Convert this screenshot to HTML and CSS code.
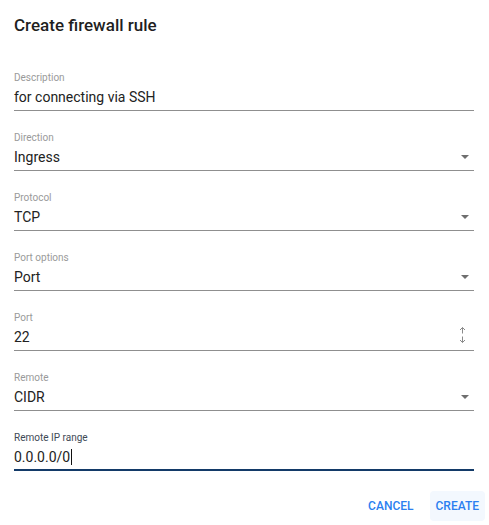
FILE: index.html
```html
<!DOCTYPE html>
<html>
<head>
<meta charset="utf-8">
<link rel="stylesheet" href="styles.css">
</head>
<body>
<div class="dialog">
  <h2 class="title">Create firewall rule</h2>
  <div class="fields">
    <div class="field">
      <div class="label">Description</div>
      <div class="control"><span class="value">for connecting via SSH</span></div>
    </div>
    <div class="field">
      <div class="label">Direction</div>
      <div class="control"><span class="value">Ingress</span><span class="caret-down"></span></div>
    </div>
    <div class="field">
      <div class="label">Protocol</div>
      <div class="control"><span class="value">TCP</span><span class="caret-down"></span></div>
    </div>
    <div class="field">
      <div class="label">Port options</div>
      <div class="control"><span class="value">Port</span><span class="caret-down"></span></div>
    </div>
    <div class="field">
      <div class="label">Port</div>
      <div class="control"><span class="value">22</span>
        <svg class="spinner" width="9" height="18" viewBox="0 0 9 18">
          <path d="M4.5 1.5 V7.5 M2 4 L4.5 1.5 L7 4" fill="none" stroke="#8a8a8a" stroke-width="1"/>
          <path d="M4.5 10.5 V16.5 M2 14 L4.5 16.5 L7 14" fill="none" stroke="#8a8a8a" stroke-width="1"/>
        </svg>
      </div>
    </div>
    <div class="field">
      <div class="label">Remote</div>
      <div class="control"><span class="value">CIDR</span><span class="caret-down"></span></div>
    </div>
    <div class="field focused">
      <div class="label">Remote IP range</div>
      <div class="control"><span class="value">0.0.0.0/0<span class="cursor"></span></span></div>
    </div>
  </div>
  <div class="actions">
    <button class="btn">CANCEL</button>
    <button class="btn primary">CREATE</button>
  </div>
</div>
</body>
</html>
```

FILE: styles.css
```css
html, body {
  margin: 0;
  padding: 0;
  background: #ffffff;
}
body {
  font-family: Roboto, "Liberation Sans", sans-serif;
  color: #212121;
}
.dialog {
  width: 489px;
  height: 525px;
  box-sizing: border-box;
  padding: 14px 15px 0 14px;
}
.title {
  margin: 0;
  font-size: 17px;
  font-weight: 500;
  line-height: 22px;
  color: #1f1f1f;
}
.fields {
  margin-top: 35px;
  display: flex;
  flex-direction: column;
  gap: 20px;
}
.field {
  display: flex;
  flex-direction: column;
}
.label {
  font-size: 10px;
  line-height: 14px;
  color: #9a9a9a;
  margin-bottom: 3px;
}
.control {
  display: flex;
  align-items: center;
  justify-content: space-between;
  height: 18px;
  padding-bottom: 4px;
  border-bottom: 1px solid #8f8f8f;
}
.value {
  font-size: 14px;
  line-height: 18px;
  color: #222222;
  display: inline-flex;
  align-items: center;
}
.caret-down {
  width: 0;
  height: 0;
  border-left: 4.5px solid transparent;
  border-right: 4.5px solid transparent;
  border-top: 4.5px solid #6f6f6f;
  margin-right: 5px;
}
.spinner {
  margin-right: 7px;
  margin-top: -5px;
}
.focused .label {
  color: #3e4a56;
}
.focused .control {
  border-bottom: 2px solid #133a68;
  padding-bottom: 3px;
}
.cursor {
  display: inline-block;
  width: 1px;
  height: 16px;
  background: #111;
  margin-left: 1px;
}
.actions {
  margin-top: 20px;
  display: flex;
  justify-content: flex-end;
  gap: 10px;
  margin-right: -11px;
}
.btn {
  font-family: Roboto, "Liberation Sans", sans-serif;
  font-size: 12px;
  font-weight: 500;
  color: #2b7ff0;
  background: transparent;
  border: none;
  border-radius: 4px;
  height: 30px;
  padding: 0 6px;
  cursor: pointer;
}
.btn.primary {
  background: #f3f8fe;
}
```
